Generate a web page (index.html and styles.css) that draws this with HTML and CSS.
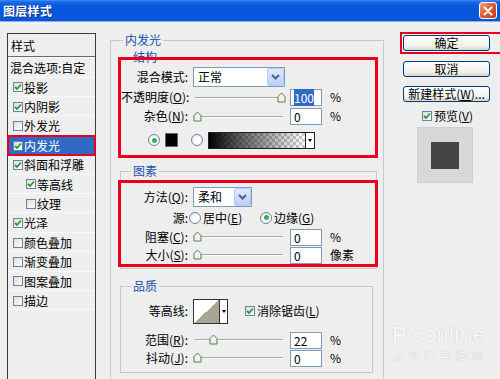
FILE: index.html
```html
<!DOCTYPE html>
<html>
<head>
<meta charset="utf-8">
<link rel="stylesheet" href="styles.css">
</head>
<body>
<div class="win">
  <div class="titlebar">
    <span class="title">图层样式</span>
    <span class="close"><svg width="10" height="10" viewBox="0 0 10 10"><path d="M1.5 1.5 L8.5 8.5 M8.5 1.5 L1.5 8.5" stroke="#fff" stroke-width="2" stroke-linecap="round"/></svg></span>
  </div>
  <div class="titleline"></div>
  <div class="body">
    <div class="styles">
      <div class="sh">样式</div>
      <div class="row plain first">混合选项:自定</div>
      <div class="row"><i class="cb on"><svg width="8" height="8" viewBox="0 0 8 8"><path d="M1 4 L3 6 L7 1.5" stroke="#21a121" stroke-width="1.8" fill="none"/></svg></i>投影</div>
      <div class="row"><i class="cb on"><svg width="8" height="8" viewBox="0 0 8 8"><path d="M1 4 L3 6 L7 1.5" stroke="#21a121" stroke-width="1.8" fill="none"/></svg></i>内阴影</div>
      <div class="row"><i class="cb"></i>外发光</div>
      <div class="row sel"><i class="cb on"><svg width="8" height="8" viewBox="0 0 8 8"><path d="M1 4 L3 6 L7 1.5" stroke="#21a121" stroke-width="1.8" fill="none"/></svg></i>内发光</div>
      <div class="row"><i class="cb on"><svg width="8" height="8" viewBox="0 0 8 8"><path d="M1 4 L3 6 L7 1.5" stroke="#21a121" stroke-width="1.8" fill="none"/></svg></i>斜面和浮雕</div>
      <div class="row ind"><i class="cb on"><svg width="8" height="8" viewBox="0 0 8 8"><path d="M1 4 L3 6 L7 1.5" stroke="#21a121" stroke-width="1.8" fill="none"/></svg></i>等高线</div>
      <div class="row ind"><i class="cb"></i>纹理</div>
      <div class="row"><i class="cb on"><svg width="8" height="8" viewBox="0 0 8 8"><path d="M1 4 L3 6 L7 1.5" stroke="#21a121" stroke-width="1.8" fill="none"/></svg></i>光泽</div>
      <div class="row"><i class="cb"></i>颜色叠加</div>
      <div class="row"><i class="cb"></i>渐变叠加</div>
      <div class="row"><i class="cb"></i>图案叠加</div>
      <div class="row"><i class="cb"></i>描边</div>
    </div>

    <fieldset class="main">
      <legend>内发光</legend>
      <div class="sublabel">结构</div>
      <div class="redbox struct">
        <div class="fr r1">
          <span class="lab">混合模式:</span>
          <span class="select sel-mode"><span class="stext">正常</span><span class="dd"><svg width="9" height="6" viewBox="0 0 9 6"><path d="M1 1 L4.5 4.5 L8 1" stroke="#4d6185" stroke-width="2" fill="none"/></svg></span></span>
        </div>
        <div class="fr r2">
          <span class="lab">不透明度(<u>O</u>):</span>
          <span class="slider"><svg class="thumb" style="left:82px" width="9" height="11" viewBox="0 0 9 11"><path d="M1 4.5 L4.5 1 L8 4.5 V10 H1 Z" fill="#eef5e8" stroke="#5a7a5a"/></svg></span>
          <span class="num"><span class="hl">100</span></span>
          <span class="pct">%</span>
        </div>
        <div class="fr r3">
          <span class="lab">杂色(<u>N</u>):</span>
          <span class="slider"><svg class="thumb" style="left:-2px" width="9" height="11" viewBox="0 0 9 11"><path d="M1 4.5 L4.5 1 L8 4.5 V10 H1 Z" fill="#eef5e8" stroke="#5a7a5a"/></svg></span>
          <span class="num">0</span>
          <span class="pct">%</span>
        </div>
        <div class="fr r4">
          <span class="rd on rd1"></span>
          <span class="sw"></span>
          <span class="rd rd2"></span>
          <span class="grad"><span class="gfill"></span><span class="garr"><i class="tri"></i></span></span>
        </div>
      </div>

      <fieldset class="grp grp-el">
        <legend>图素</legend>
        <div class="redbox elem">
          <div class="fr e1">
            <span class="lab">方法(<u>Q</u>):</span>
            <span class="select sel-meth"><span class="stext">柔和</span><span class="dd"><svg width="9" height="6" viewBox="0 0 9 6"><path d="M1 1 L4.5 4.5 L8 1" stroke="#4d6185" stroke-width="2" fill="none"/></svg></span></span>
          </div>
          <div class="fr e2">
            <span class="lab">源:</span>
            <span class="opt opt1"><span class="rd"></span><span class="otext">居中(<u>E</u>)</span></span>
            <span class="opt"><span class="rd on"></span><span class="otext">边缘(<u>G</u>)</span></span>
          </div>
          <div class="fr e3">
            <span class="lab">阻塞(<u>C</u>):</span>
            <span class="slider"><svg class="thumb" style="left:-2px" width="9" height="11" viewBox="0 0 9 11"><path d="M1 4.5 L4.5 1 L8 4.5 V10 H1 Z" fill="#eef5e8" stroke="#5a7a5a"/></svg></span>
            <span class="num">0</span>
            <span class="pct">%</span>
          </div>
          <div class="fr e3">
            <span class="lab">大小(<u>S</u>):</span>
            <span class="slider"><svg class="thumb" style="left:-2px" width="9" height="11" viewBox="0 0 9 11"><path d="M1 4.5 L4.5 1 L8 4.5 V10 H1 Z" fill="#eef5e8" stroke="#5a7a5a"/></svg></span>
            <span class="num">0</span>
            <span class="pct">像素</span>
          </div>
        </div>
      </fieldset>

      <fieldset class="grp grp-q">
        <legend>品质</legend>
        <div class="fr q1">
          <span class="lab">等高线:</span>
          <span class="contour"><span class="cfill"></span><span class="carr"><i class="tri"></i></span></span>
          <span class="cb on aa"><svg width="8" height="8" viewBox="0 0 8 8"><path d="M1 4 L3 6 L7 1.5" stroke="#21a121" stroke-width="1.8" fill="none"/></svg></span>
          <span class="otext">消除锯齿(<u>L</u>)</span>
        </div>
        <div class="fr q2">
          <span class="lab">范围(<u>R</u>):</span>
          <span class="slider"><svg class="thumb" style="left:14px" width="9" height="11" viewBox="0 0 9 11"><path d="M1 4.5 L4.5 1 L8 4.5 V10 H1 Z" fill="#eef5e8" stroke="#5a7a5a"/></svg></span>
          <span class="num">22</span>
          <span class="pct">%</span>
        </div>
        <div class="fr q3">
          <span class="lab">抖动(<u>J</u>):</span>
          <span class="slider"><svg class="thumb" style="left:-2px" width="9" height="11" viewBox="0 0 9 11"><path d="M1 4.5 L4.5 1 L8 4.5 V10 H1 Z" fill="#eef5e8" stroke="#5a7a5a"/></svg></span>
          <span class="num">0</span>
          <span class="pct">%</span>
        </div>
      </fieldset>
    </fieldset>

    <div class="side">
      <div class="okwrap"><div class="btn">确定</div></div>
      <div class="btn b2">取消</div>
      <div class="btn b3">新建样式(<u>W</u>)...</div>
      <div class="pv"><span class="cb on"><svg width="8" height="8" viewBox="0 0 8 8"><path d="M1 4 L3 6 L7 1.5" stroke="#21a121" stroke-width="1.8" fill="none"/></svg></span><span class="otext">预览(<u>V</u>)</span></div>
      <div class="pvbox"><div class="sq"></div></div>
    </div>
  </div>
  <div class="wm">
    <div class="wm1">PConline</div>
    <div class="wm2">太平洋电脑网</div>
  </div>
</div>
</body>
</html>
```
FILE: styles.css
```css
* { box-sizing: border-box; }
html, body { margin: 0; padding: 0; }
body {
  width: 500px; height: 379px; overflow: hidden;
  font-family: "Noto Sans CJK SC", "Liberation Sans", sans-serif;
  font-size: 12px; line-height: 1.2; color: #000; background: #eeeeee;
}
u { text-decoration: underline; text-underline-offset: 1px; }
.win { position: relative; width: 500px; height: 379px; overflow: hidden; background: #eeeeee; }

.titlebar {
  height: 21px; display: flex; align-items: center; justify-content: space-between;
  padding: 0 3px 0 3px;
  background: linear-gradient(#3f8ff6 0, #1867e6 2px, #0759dd 6px, #0455d8 13px, #0a5bdd 18px, #0b50cc 21px);
}
.title { color: #fff; font-weight: bold; font-size: 12px; line-height: 16px; text-shadow: 1px 1px 0 #0b2f86; letter-spacing: 0.3px; }
.close {
  width: 18px; height: 17px; border: 1px solid #fff; border-radius: 3px;
  background: linear-gradient(135deg, #f3a27f, #dd5a32 50%, #c13d18);
  display: flex; align-items: center; justify-content: center;
}
.titleline { height: 3px; background: linear-gradient(#8fb3ef 0, #8fb3ef 1px, #dfe8f8 1px, #f4f6fa 3px); }

.body { display: flex; align-items: flex-start; height: 355px; }

/* left style list */
.styles {
  flex: none; width: 89px; height: 360px; margin: 9px 0 0 7px;
  border: 1px solid #3c3c3c; background: #efefef;
}
.sh { height: 23px; line-height: 20px; padding: 2px 0 0 3px; border-bottom: 1px solid #6a6a6a; box-shadow: 0 1px 0 #fbfbfb; }
.row {
  height: 19.4px; line-height: 19.4px; display: flex; align-items: center;
  padding-left: 5px; white-space: nowrap; box-shadow: inset 0 -1px 0 #f9f9f9;
}
.row.first { margin-top: 1.3px; }
.row.plain { padding-left: 2px; }
.row.ind { padding-left: 18px; }
.row.sel { background: #316ac5; color: #fff; outline: 2px solid #e8001c; outline-offset: -1px; }
.row .cb { margin-right: 1px; }

.cb {
  width: 10px; height: 10px; flex: none; border: 1px solid #6a82a8;
  background: linear-gradient(135deg, #dcdcd7, #ffffff);
  display: inline-flex; align-items: center; justify-content: center;
}

/* middle */
.main {
  flex: none; width: 274px; height: 360px; margin: 9px 0 0 14px; padding: 0;
  border: 1px solid #c8c8c8; min-width: 0;
}
legend { padding: 0 2px; margin-left: 12px; line-height: 14px; font-size: 12px; color: #2150b0; }
.sublabel { margin: 3px 0 0 22px; height: 13px; line-height: 13px; color: #2150b0; }
.redbox { border: 3px solid #e8001c; position: relative; }
.struct { margin: -6px 5px 0 7px; height: 101px; padding-top: 7px; }

.fr { display: flex; align-items: center; height: 19px; white-space: nowrap; }
.lab { width: 67px; flex: none; text-align: right; }
.r1 { height: 20px; }
.r2 { margin-top: 1px; }
.r4 { height: 20px; margin-top: 4px; }

.select {
  display: flex; align-items: center; height: 20px; margin-left: 5px;
  border: 1px solid #7f9db9; background: #fff; flex: none;
}
.sel-mode { width: 92px; }
.sel-meth { width: 59px; }
.stext { padding-left: 4px; line-height: 16px; }
.dd {
  width: 17px; height: 18px; margin-left: auto; border: 1px solid #b7caf5; border-radius: 2px;
  background: linear-gradient(#dfe9fe, #bacff9); display: flex; align-items: center; justify-content: center;
}

.slider {
  position: relative; width: 88px; height: 12px; margin-left: 7px; flex: none;
  background:
    linear-gradient(#a9a9a9, #a9a9a9) 0 5px / 100% 1px no-repeat,
    linear-gradient(#ffffff, #ffffff) 0 6px / 100% 1px no-repeat;
}
.thumb { position: absolute; top: 0; }
.num {
  width: 32px; height: 17px; margin-left: 7px; flex: none; border: 1px solid #7f9db9;
  background: #fff; padding-left: 3px; line-height: 15px;
}
.hl { background: #316ac5; color: #fff; }
.pct { margin-left: 8px; }

.rd {
  width: 12px; height: 12px; border-radius: 50%; border: 1px solid #6b84a8; flex: none;
  background: radial-gradient(circle at 60% 60%, #ffffff 35%, #dcdcd7);
  display: inline-flex; align-items: center; justify-content: center;
}
.rd.on::after { content: ""; width: 5px; height: 5px; border-radius: 50%; background: #2cb44b; }
.rd1 { margin-left: 27px; }
.sw { width: 13px; height: 14px; margin-left: 5px; background: #000; border: 1px solid #666; flex: none; }
.rd2 { margin-left: 13px; }
.grad { display: flex; width: 107px; height: 17px; margin-left: 5px; border: 1px solid #222; flex: none; }
.gfill {
  flex: 1;
  background:
    linear-gradient(90deg, #000 0%, rgba(0,0,0,0.6) 35%, rgba(0,0,0,0) 100%),
    repeating-conic-gradient(#cdcdcd 0 25%, #ffffff 0 50%) 0 0 / 6px 6px;
}
.garr { width: 9px; border-left: 1px solid #222; background: #fff; display: flex; align-items: center; justify-content: center; }
.tri { width: 0; height: 0; border-left: 2.5px solid transparent; border-right: 2.5px solid transparent; border-top: 3px solid #000; }

.grp { border: 1px solid #c8c8c8; min-width: 0; padding: 0; }
.grp legend { margin-left: 10px; }
.grp-el { margin: 6px 6px 0 9px; padding-bottom: 1px; }
.elem { margin: 2px -2px 0 -3px; height: 87px; padding-top: 4px; }
.e1 { height: 20px; }
.e2 { height: 20px; margin-top: 1px; }
.e3 { height: 18px; }
.opt { display: flex; align-items: center; }
.opt1 { width: 71px; margin-left: 1px; }
.otext { margin-left: 2px; }

.grp-q { margin: 10px 10px 0 9px; padding: 5px 0 5px; }
.q1 { height: 26px; }
.q2 { height: 18px; margin-top: 7px; }
.q3 { height: 18px; }
.contour { display: flex; width: 35px; height: 25px; margin-left: 5px; border: 1px solid #333; background: #fff; flex: none; }
.cfill { flex: 1; background: linear-gradient(to top left, #aaa494 50%, #ffffff 50%); }
.carr { width: 8px; border-left: 1px solid #333; display: flex; align-items: center; justify-content: center; }
.aa { margin-left: 17px; }

/* right */
.side { flex: none; width: 110px; margin: 8px 0 0 16px; }
.okwrap { border: 2px solid #e8001c; padding: 1px 0 1px 1px; width: 110px; }
.btn {
  width: 87px; height: 16px; border: 1px solid #003c74; border-radius: 3px;
  background: linear-gradient(#ffffff, #f2f1ec 70%, #d9d4c8);
  text-align: center; line-height: 14px; font-size: 12px;
}
.b2 { margin: 7px 0 0 3px; }
.b3 { margin: 9px 0 0 3px; }
.pv { display: flex; align-items: center; height: 14px; margin: 7px 0 0 22px; }
.pvbox {
  width: 56px; height: 56px; margin: 4px 0 0 17px; background: #d8d8d8; border: 1px solid #cecece;
  display: flex; align-items: center; justify-content: center;
}
.sq { width: 28px; height: 27px; background: #454545; }

/* watermark overlay */
.wm { position: absolute; left: 392px; top: 324px; color: #fafafa; text-shadow: 0 0 1px #b0b0b0; }
.wm1 { font-family: "Liberation Sans", sans-serif; font-size: 22px; line-height: 22px; letter-spacing: 0.5px; }
.wm2 { font-size: 11px; line-height: 13px; letter-spacing: 5px; margin-top: 3px; }
```
